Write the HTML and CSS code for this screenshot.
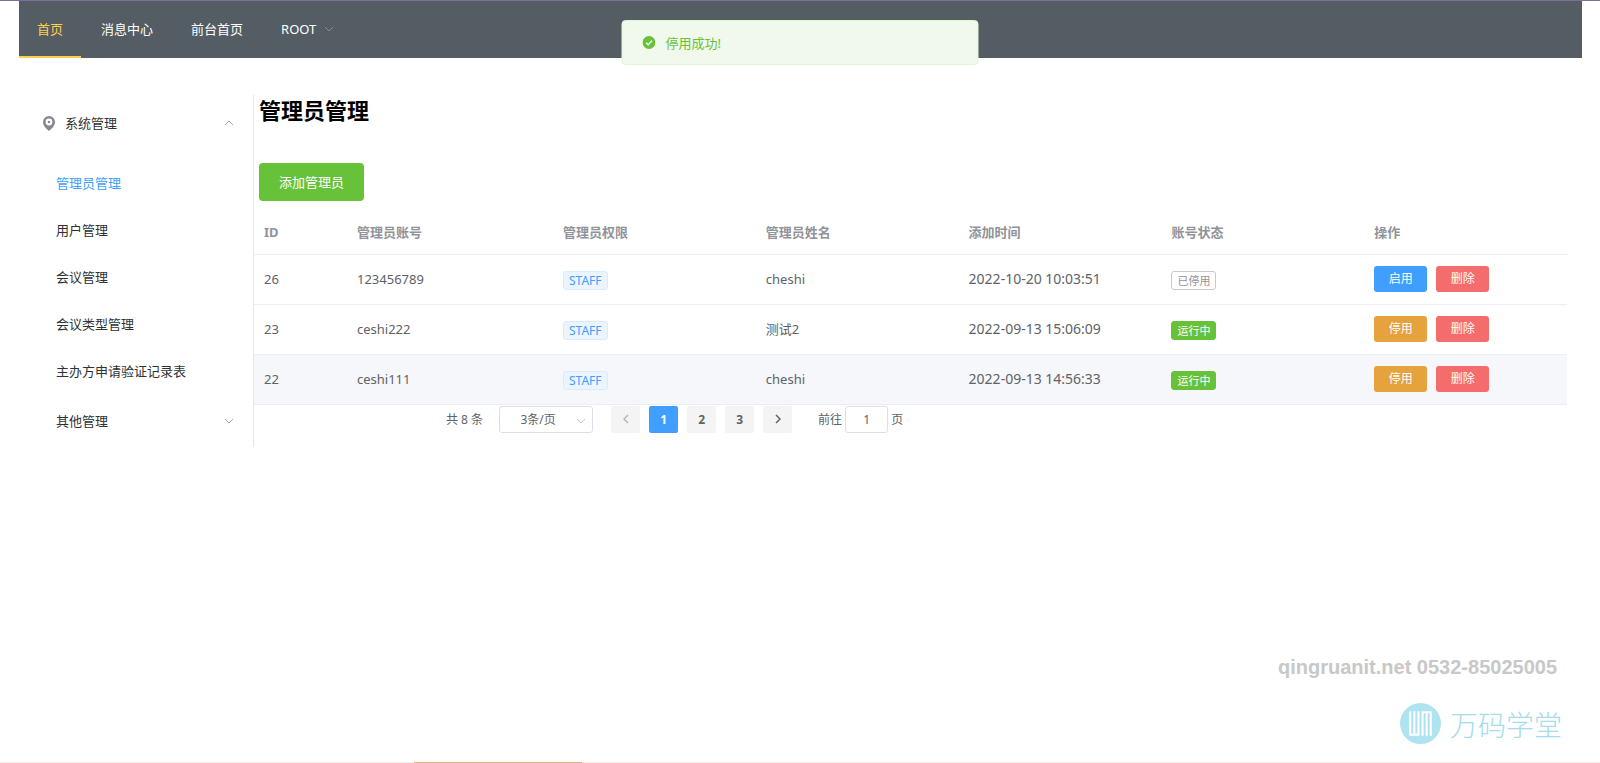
FILE: index.html
```html
<!DOCTYPE html>
<html lang="zh-CN">
<head>
<meta charset="utf-8">
<title>管理员管理</title>
<link rel="stylesheet" href="styles.css">
</head>
<body>
<header class="topbar">
  <nav class="topnav">
    <a class="topnav-item is-active" href="#">首页</a>
    <a class="topnav-item" href="#">消息中心</a>
    <a class="topnav-item" href="#">前台首页</a>
    <a class="topnav-item" href="#">ROOT
      <svg class="chevron" viewBox="0 0 10 6"><path d="M1 1l4 4 4-4"/></svg>
    </a>
  </nav>
</header>

<div class="layout">
  <aside class="sidebar">
    <button class="group" type="button">
      <svg class="pin" viewBox="0 0 12 15"><path fill-rule="evenodd" d="M6 0a6 6 0 0 1 6 6c0 3.500-3 6.500-6 9C3 12.500 0 9.500 0 6a6 6 0 0 1 6-6zm0 2.600a3.400 3.400 0 1 0 0 6.800 3.400 3.400 0 0 0 0-6.800z"/><circle cx="6" cy="6" r="1.200"/></svg>
      <span>系统管理</span>
      <svg class="chevron" viewBox="0 0 10 6"><path d="M1 5l4-4 4 4"/></svg>
    </button>
    <nav class="submenu">
      <a class="submenu-item is-active" href="#">管理员管理</a>
      <a class="submenu-item" href="#">用户管理</a>
      <a class="submenu-item" href="#">会议管理</a>
      <a class="submenu-item" href="#">会议类型管理</a>
      <a class="submenu-item" href="#">主办方申请验证记录表</a>
    </nav>
    <button class="group group-plain" type="button">
      <span>其他管理</span>
      <svg class="chevron" viewBox="0 0 10 6"><path d="M1 1l4 4 4-4"/></svg>
    </button>
  </aside>

  <main class="content">
    <h1 class="title">管理员管理</h1>
    <button class="add" type="button">添加管理员</button>
    <table class="table">
      <thead>
        <tr><th class="col-id">ID</th><th class="col-account">管理员账号</th><th>管理员权限</th><th>管理员姓名</th><th>添加时间</th><th>账号状态</th><th>操作</th></tr>
      </thead>
      <tbody>
        <tr>
          <td>26</td><td>123456789</td><td><span class="tag">STAFF</span></td><td>cheshi</td><td class="time">2022-10-20 10:03:51</td>
          <td><span class="tag tag-off">已停用</span></td>
          <td><div class="actions"><button class="btn btn-blue" type="button">启用</button><button class="btn btn-red" type="button">删除</button></div></td>
        </tr>
        <tr>
          <td>23</td><td>ceshi222</td><td><span class="tag">STAFF</span></td><td>测试2</td><td class="time">2022-09-13 15:06:09</td>
          <td><span class="tag tag-on">运行中</span></td>
          <td><div class="actions"><button class="btn btn-orange" type="button">停用</button><button class="btn btn-red" type="button">删除</button></div></td>
        </tr>
        <tr class="is-hover">
          <td>22</td><td>ceshi111</td><td><span class="tag">STAFF</span></td><td>cheshi</td><td class="time">2022-09-13 14:56:33</td>
          <td><span class="tag tag-on">运行中</span></td>
          <td><div class="actions"><button class="btn btn-orange" type="button">停用</button><button class="btn btn-red" type="button">删除</button></div></td>
        </tr>
      </tbody>
    </table>

    <div class="pagination">
      <span>共 8 条</span>
      <span class="size">
        <select class="size-select" aria-label="每页条数"><option>3条/页</option></select>
        <svg class="chevron size-arrow" viewBox="0 0 10 6"><path d="M1 1l4 4 4-4"/></svg>
      </span>
      <div class="pages">
        <button class="page" type="button" disabled aria-label="上一页"><svg class="arrow" viewBox="0 0 6 10"><path d="M5 1L1 5l4 4"/></svg></button>
        <button class="page is-current" type="button">1</button>
        <button class="page" type="button">2</button>
        <button class="page" type="button">3</button>
        <button class="page" type="button" aria-label="下一页"><svg class="arrow" viewBox="0 0 6 10"><path d="M1 1l4 4-4 4"/></svg></button>
      </div>
      <label class="jump">前往<input class="jump-input" type="text" value="1">页</label>
    </div>
  </main>
</div>

<div class="toast" role="alert">
  <svg class="toast-icon" viewBox="0 0 14 14"><circle cx="7" cy="7" r="7"/><path d="M4 7.200l2.200 2.200L10.200 5"/></svg>
  <span>停用成功!</span>
</div>

<footer class="brand">
  <p class="brand-contact">qingruanit.net 0532-85025005</p>
  <div class="brand-logo">
    <svg class="brand-mark" viewBox="0 0 40 40"><circle cx="20" cy="20" r="20"/><path d="M10 8v23h8V8M14 8v23M22 32V9h8v23M26 32V9"/></svg>
    <span class="brand-name">万码学堂</span>
  </div>
</footer>
<div class="bottom-line"><div class="bottom-accent"></div></div>
</body>
</html>
```
FILE: styles.css
```css
* { box-sizing: border-box; }

body {
  margin: 0;
  min-height: 100vh;
  position: relative;
  border-top: 1px solid #7d6f9c;
  background: #fff;
  color: #303133;
  font: 13px/20px "Noto Sans", "Noto Sans CJK SC", sans-serif;
}

button, input, select { font: inherit; color: inherit; margin: 0; }
button { border: 0; background: none; cursor: pointer; }
a { color: inherit; text-decoration: none; }

.chevron { width: 10px; height: 6px; fill: none; stroke: #a4a8ae; stroke-width: 1; }

.topbar { margin: 0 18px 0 19px; background: #545c64; }
.topnav { display: flex; gap: 2px; }
.topnav-item {
  display: flex;
  align-items: center;
  gap: 8px;
  height: 57px;
  padding: 0 18px;
  border-bottom: 2px solid transparent;
  color: #fff;
}
.topnav-item.is-active { color: #ffd04b; border-bottom-color: #ffd04b; }
.topnav-item .chevron { stroke: #858b92; }

.layout { display: flex; align-items: flex-start; margin: 37px 33px 0 19px; }

.sidebar {
  flex: none;
  width: 235px;
  border-right: 1px solid #e6e6e6;
}
.group {
  display: flex;
  align-items: center;
  gap: 10px;
  width: 100%;
  height: 56px;
  padding: 0 19px 0 24px;
}
.group-plain { padding-left: 37px; }
.group .chevron { margin-left: auto; }
.pin { width: 12px; height: 15px; fill: #85898f; }
.submenu { padding-top: 9px; }
.submenu-item { display: block; height: 47px; line-height: 47px; padding-left: 37px; }
.submenu-item.is-active { color: #409eff; }
.group-plain { height: 52px; }

.content { flex: 1; min-width: 0; }
.title { margin: 0 0 38px 5px; font-size: 22px; line-height: 30px; color: #000; }
.add {
  display: block;
  height: 38px;
  margin-left: 5px;
  padding: 0 20px;
  border-radius: 4px;
  background: #67c23a;
  color: #fff;
}

.table { width: 100%; margin-top: 8px; border-collapse: separate; border-spacing: 0; table-layout: fixed; color: #606266; }
.table th, .table td { height: 50px; padding: 0 10px; border-bottom: 1px solid #ebeef5; text-align: left; }
.table th { height: 46px; color: #909399; font-weight: 700; }
.table td { padding-bottom: 1px; }
.table .col-id { width: 93px; }
.table .col-account { width: 206px; }
.table .time { font-size: 14px; }
.is-hover td { background: #f5f7fa; }

.tag {
  display: inline-block;
  padding: 0 5px;
  border: 1px solid #d9ecff;
  border-radius: 3px;
  background: #ecf5ff;
  color: #409eff;
  font-size: 12px;
  line-height: 17px;
  vertical-align: middle;
}
.tag-off { border-color: #c8c9cc; background: #fff; color: #909399; font-size: 11px; }
.tag-on { border-color: #67c23a; background: #67c23a; color: #fff; font-size: 11px; }

.actions { display: flex; gap: 9px; }
.btn { width: 53px; height: 26px; padding: 0; border-radius: 3px; color: #fff; font-size: 12px; line-height: 26px; }
.btn-blue { background: #409eff; }
.btn-orange { background: #e6a23c; }
.btn-red { background: #f56c6c; }

.pagination { display: flex; align-items: center; margin: 1px 0 0 192px; color: #606266; font-size: 12px; }
.size { position: relative; margin-left: 16px; }
.size-select {
  display: block;
  width: 94px;
  height: 27px;
  padding: 0 16px 0 0;
  border: 1px solid #dcdfe6;
  border-radius: 3px;
  appearance: none;
  background: #fff;
  text-align: center;
  text-align-last: center;
}
.size-arrow { position: absolute; right: 7px; top: 12px; stroke: #c0c4cc; }
.pages { display: flex; gap: 9px; margin: 0 26px 0 18px; }
.page { width: 29px; height: 27px; padding: 0; border-radius: 2px; background: #f4f4f5; font-weight: 700; }
.page.is-current { background: #409eff; color: #fff; }
.page:disabled { color: #b4b7bd; }
.arrow { width: 6px; height: 10px; fill: none; stroke: currentColor; stroke-width: 1.5; }
.jump { display: flex; align-items: center; gap: 3px; }
.jump-input { width: 43px; height: 27px; padding: 0; border: 1px solid #dcdfe6; border-radius: 3px; text-align: center; }

.toast {
  position: absolute;
  top: 19px;
  left: 50%;
  transform: translateX(-50%);
  display: flex;
  align-items: center;
  gap: 10px;
  width: 357px;
  height: 45px;
  padding: 0 20px;
  border: 1px solid #e1f3d8;
  border-radius: 4px;
  background: #f0f9eb;
  color: #67c23a;
}
.toast-icon { width: 13px; height: 13px; fill: #67c23a; }
.toast-icon path { fill: none; stroke: #fff; stroke-width: 1.5; }

.brand { position: absolute; right: 38px; bottom: 19px; display: flex; flex-direction: column; align-items: flex-end; gap: 23px; }
.brand-contact { margin: 0 5px 0 0; color: #c8c8c8; font: bold 20px/26px "Liberation Sans", sans-serif; }
.brand-logo { display: flex; align-items: center; gap: 9px; }
.brand-mark { width: 41px; height: 41px; fill: #aee3ef; }
.brand-mark path { fill: none; stroke: #fff; stroke-width: 2; }
.brand-name { color: #a5dbec; font: 300 28px/40px "Noto Sans CJK SC", sans-serif; }

.bottom-line { position: absolute; left: 0; right: 0; bottom: 0; height: 1px; padding-left: 414px; background: #f6ece8; }
.bottom-accent { width: 168px; height: 1px; background: #e3ae85; }
```
